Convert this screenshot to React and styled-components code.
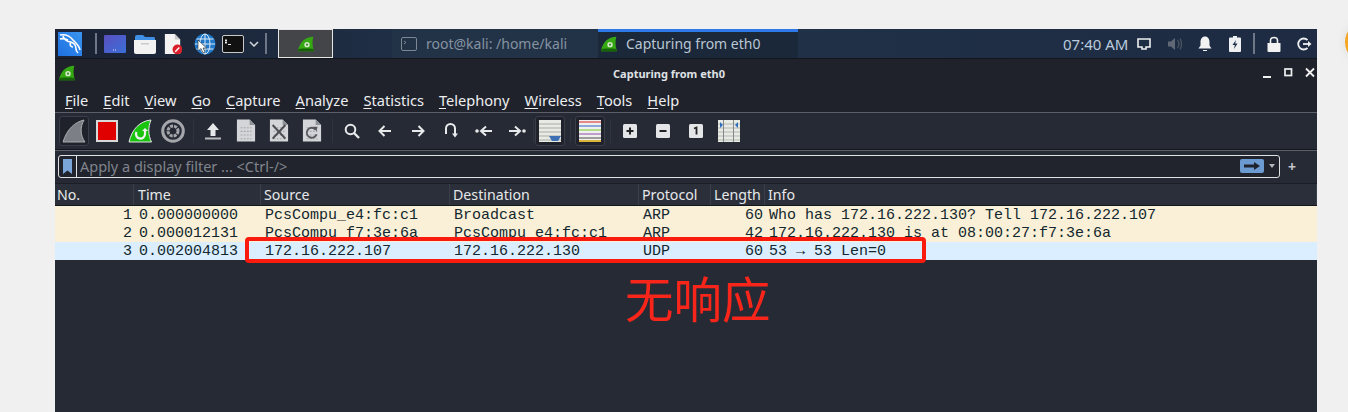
import React from 'react'
import styled, { createGlobalStyle } from 'styled-components'

const GlobalStyle = createGlobalStyle`
  html, body { margin:0; padding:0; background:#f0f0f0; height:412px; overflow:hidden; }
  * { box-sizing:border-box; }
`

const Fin = ({ size = 24, color = '#35a814', dark = '#176408', dot = true }) => (
  <svg width={size} height={size} viewBox="0 0 24 24">
    <path d="M23 1 C11 1 2 9 0 23 L24 23 C21.5 16 21 8 23 1 Z" fill={color} />
    <path d="M0 23 L24 23 L23 19.5 C15 18.5 7 19 .8 19.5 Z" fill={dark} />
    {dot && <circle cx="13.5" cy="13" r="4" fill="#d5ecc9" />}
    {dot && <circle cx="13.5" cy="13" r="1.7" fill="#4a8a3a" />}
  </svg>
)

const KaliLogo = () => (
  <svg width="24" height="24" viewBox="0 0 24 24">
    <defs><linearGradient id="kali" x1="0" y1="1" x2="1" y2="0"><stop offset="0" stopColor="#1f6fe0" /><stop offset="1" stopColor="#3a95f0" /></linearGradient></defs>
    <rect width="24" height="24" fill="url(#kali)" />
    <path d="M2 3 C7 2 12 4 15 8 C18 11 21 13 22 18 M2 7 C5 6 8 7 10 8 M5 4 C6 7 9 10 13 10 C16 11 18 14 18 17 C18 19 19 20 20 21 M13 10 C11 13 13 15 15 15" stroke="#fff" strokeWidth="1.6" fill="none" />
  </svg>
)

const FileSheet = ({ children }) => (
  <svg width="20" height="25" viewBox="0 0 22 26">
    <path d="M1 1 H15 L21 7 V25 H1 Z" fill="#d3d5d8" />
    <path d="M15 1 L21 7 H15 Z" fill="#8f9296" />
    <g stroke="#a4a7ab" strokeWidth="1.2" strokeDasharray="2 1.5">
      <path d="M5 10 H17 M5 14 H17 M5 18 H17 M5 22 H17" />
    </g>
    {children}
  </svg>
)

const Page = styled.div`
  width:1348px;
  height:412px;
  padding-top:29px;
  position:relative;
  overflow:hidden;
`

const OrangeBlob = styled.div`
  position:absolute;
  left:1345px;
  top:22px;
  width:40px;
  height:40px;
  border-radius:50%;
  background:#f6a623;
  box-shadow:0 0 6px 3px #e6e6e6;
`

const Desktop = styled.div`
  margin-left:55px;
  width:1262px;
  height:383px;
  display:flex;
  flex-direction:column;
  background:#262a35;
  position:relative;
  font-family:"Noto Sans", sans-serif;
`

const Panel = styled.div`
  height:30px;
  flex:none;
  display:flex;
  align-items:center;
  background:linear-gradient(90deg,#1a2233 0%,#20324a 35%,#1f3047 60%,#1e2b42 100%);
  border-bottom:1px solid #14161d;
`

const Launcher = styled.div`
  display:flex;
  align-items:center;
  justify-content:center;
  width:${p => p.$w}px;
  height:29px;
  flex:none;
`

const PanelSep = styled.div`
  flex:none;
  width:2px;
  height:21px;
  background:#6e7785;
`

const TaskButton = styled.div`
  width:55px;
  height:29px;
  flex:none;
  margin-left:11px;
  background:#444548;
  border:1px solid #e6e6e6;
  display:flex;
  align-items:center;
  justify-content:center;
`

const Tab = styled.div`
  height:29px;
  width:${p => p.$w}px;
  flex:none;
  margin-left:${p => p.$ml || 0}px;
  display:flex;
  align-items:center;
  gap:9px;
  padding-left:${p => p.$pl}px;
  padding-bottom:3px;
  font-size:14px;
  color:${p => (p.$active ? '#b9c6d3' : '#8593a1')};
  background:${p => (p.$active ? '#1b2839' : '#223247')};
  border-top:${p => (p.$active ? '3px solid #2f78e8' : '3px solid transparent')};
`

const Tray = styled.div`
  margin-left:auto;
  display:flex;
  align-items:center;
  height:29px;
`

const Clock = styled.span`
  font-size:15px;
  color:#b9cbdc;
  width:65px;
  white-space:nowrap;
`

const TrayIcon = styled.div`
  width:${p => p.$w || 30}px;
  display:flex;
  align-items:center;
  justify-content:center;
  flex:none;
`

const TitleBar = styled.div`
  height:28px;
  flex:none;
  display:flex;
  align-items:center;
  background:#20222b;
  position:relative;
  padding-left:4px;
`

const TitleText = styled.div`
  position:absolute;
  left:0;
  right:0;
  text-align:center;
  font-size:11px;
  font-weight:700;
  color:#dfe1e4;
  padding-right:34px;
`

const WinButtons = styled.div`
  margin-left:auto;
  display:flex;
  gap:10px;
  padding-right:1px;
`

const MenuBar = styled.div`
  height:26px;
  flex:none;
  display:flex;
  align-items:center;
  padding-left:10px;
  gap:15px;
  background:#20222b;
  border-bottom:1px solid #5d5f66;
  font-size:14.6px;
  color:#eceef0;
`

const MenuItem = styled.span`
  u { text-underline-offset:2px; text-decoration-thickness:1px; }
`

const Toolbar = styled.div`
  height:38px;
  flex:none;
  display:flex;
  align-items:center;
  padding-left:4px;
  padding-bottom:2px;
  background:#262a35;
  border-bottom:1px solid #5d5f66;
  box-shadow:inset 0 -1px 0 #14161d;
`

const ToolGroup = styled.div`
  display:flex;
  gap:3px;
`

const ToolButton = styled.div`
  width:30px;
  height:30px;
  flex:none;
  display:flex;
  align-items:center;
  justify-content:center;
  border-radius:3px;
  border:1px solid ${p => (p.$pressed ? '#3a3e49' : 'transparent')};
  background:${p => (p.$pressed ? '#1f222b' : 'transparent')};
`

const ToolSep = styled.div`
  width:${p => p.$w || 10}px;
  flex:none;
  display:flex;
  justify-content:center;
  &::after { content:''; width:1px; height:24px; background:#30343f; }
`

const FilterBar = styled.div`
  height:30px;
  flex:none;
  display:flex;
  align-items:center;
  padding-left:3px;
  background:#262a35;
`

const FilterBox = styled.div`
  width:1222px;
  height:23px;
  flex:none;
  border:1px solid #dfe1e4;
  border-radius:3px;
  display:flex;
  align-items:center;
  background:#21242d;
  overflow:hidden;
`

const Bookmark = styled.div`
  width:18px;
  height:100%;
  flex:none;
  display:flex;
  align-items:center;
  justify-content:center;
  border-right:1px solid #dfe1e4;
`

const FilterHint = styled.span`
  font-size:14.5px;
  color:#80848c;
  padding-left:3px;
  flex:1;
  white-space:nowrap;
`

const ApplyButton = styled.div`
  width:24px;
  height:14px;
  flex:none;
  border-radius:2px;
  background:#6c9bd2;
  display:flex;
  align-items:center;
  justify-content:center;
  margin-right:5px;
`

const Drop = styled.div`
  width:0;
  height:0;
  flex:none;
  margin-right:4px;
  border-left:3.5px solid transparent;
  border-right:3.5px solid transparent;
  border-top:4px solid #b5b7bc;
`

const PlusSign = styled.span`
  margin-left:8px;
  font-size:14px;
  font-weight:700;
  color:#c4c6ca;
`

const Table = styled.div`
  margin-top:2px;
  display:flex;
  flex-direction:column;
  font-family:"Liberation Mono", monospace;
`

const columns = '79px 127px 189px 189px 72px 54px 1fr'

const HeadRow = styled.div`
  display:grid;
  grid-template-columns:${columns};
  height:23px;
  background:#2b2f39;
  border-top:1px solid #1c1e25;
  border-bottom:1px solid #14161d;
  font-family:"Noto Sans", sans-serif;
  font-size:14.2px;
  color:#e6e8ea;
`

const HeadCell = styled.div`
  padding:0 0 1px ${p => p.$pl}px;
  display:flex;
  align-items:center;
  border-right:1px solid #3b3f4a;
  white-space:nowrap;
  overflow:hidden;
`

const Row = styled.div`
  display:grid;
  grid-template-columns:${columns};
  height:18px;
  line-height:19px;
  background:${p => p.$bg};
  font-size:15px;
  color:#12272e;
  white-space:nowrap;
`

const Cell = styled.div`
  padding-left:${p => p.$pl || 0}px;
  padding-right:${p => (p.$right ? 2 : 0)}px;
  text-align:${p => (p.$right ? 'right' : 'left')};
`

const RedFrame = styled.div`
  position:absolute;
  left:190px;
  top:208px;
  width:681px;
  height:26px;
  border:4px solid #fb1a0e;
  border-radius:4px;
`

const Note = styled.div`
  position:absolute;
  left:570px;
  top:233px;
  font-family:"Noto Sans CJK SC", sans-serif;
  font-size:48.5px;
  line-height:70px;
  color:#f8251a;
`

const menus = [
  ['F', 'ile'], ['E', 'dit'], ['V', 'iew'], ['G', 'o'], ['C', 'apture'], ['A', 'nalyze'],
  ['S', 'tatistics'], ['T', 'elephony'], ['W', 'ireless'], ['T', 'ools'], ['H', 'elp'],
]

const headers = [['No.', 2], ['Time', 4], ['Source', 3], ['Destination', 3], ['Protocol', 3], ['Length', 3], ['Info', 3]]

const packets = [
  { bg:'#faf0d7', no:1, time:'0.000000000', src:'PcsCompu_e4:fc:c1', dst:'Broadcast', proto:'ARP', len:60, info:'Who has 172.16.222.130? Tell 172.16.222.107' },
  { bg:'#faf0d7', no:2, time:'0.000012131', src:'PcsCompu_f7:3e:6a', dst:'PcsCompu_e4:fc:c1', proto:'ARP', len:42, info:'172.16.222.130 is at 08:00:27:f7:3e:6a' },
  { bg:'#daeeff', no:3, time:'0.002004813', src:'172.16.222.107', dst:'172.16.222.130', proto:'UDP', len:60, info:'53 → 53 Len=0' },
]

const arrow = { stroke:'#e8e9eb', strokeWidth:2, fill:'none' }

const SmallKey = ({ children }) => (
  <svg width="14" height="14" viewBox="0 0 14 14">
    <rect width="14" height="14" rx="1.5" fill="#e4e5e7" />
    {children}
  </svg>
)

export default function App() {
  return (
    <Page>
      <GlobalStyle />
      <OrangeBlob />
      <Desktop>
        <Panel>
          <Launcher $w={29}><KaliLogo /></Launcher>
          <Launcher $w={11} />
          <PanelSep />
          <Launcher $w={7} />
          <Launcher $w={22}>
            <svg width="22" height="18" viewBox="0 0 22 18">
              <defs><linearGradient id="desk" x1="0" y1="0" x2="1" y2="1"><stop offset="0" stopColor="#5a4fc0" /><stop offset="1" stopColor="#3b6fd8" /></linearGradient></defs>
              <rect width="22" height="18" rx="1" fill="url(#desk)" />
              <path d="M9 15 H13" stroke="#dfe6f5" strokeWidth="1" strokeDasharray="1 1" />
            </svg>
          </Launcher>
          <Launcher $w={38}>
            <svg width="22" height="20" viewBox="0 0 22 20">
              <path d="M1 3 Q1 1 3 1 H9 L11 3 H20 Q21 3 21 5 V6 H1 Z" fill="#3f8fe6" />
              <path d="M0 6 H22 V18 Q22 20 20 20 H2 Q0 20 0 18 Z" fill="#f2f2f2" />
              <rect x="7" y="9" width="8" height="1.5" fill="#c9c9c9" />
            </svg>
          </Launcher>
          <Launcher $w={18}>
            <svg width="20" height="24" viewBox="0 0 20 24">
              <path d="M1 1 H12 L18 7 V23 H1 Z" fill="#f3f3f3" />
              <path d="M12 1 L18 7 H12 Z" fill="#c9c9c9" />
              <circle cx="15" cy="18" r="5.5" fill="#d9202a" />
              <path d="M12.5 20.5 L17 16" stroke="#fff" strokeWidth="1.6" />
            </svg>
          </Launcher>
          <Launcher $w={6} />
          <Launcher $w={34}>
            <svg width="22" height="22" viewBox="0 0 22 22">
              <circle cx="11" cy="11" r="10.5" fill="#1f78c8" />
              <g stroke="#dbe9f5" strokeWidth="1" fill="none">
                <ellipse cx="11" cy="11" rx="5" ry="10" />
                <path d="M11 1 V21 M1 11 H21 M2.5 6 H19.5 M2.5 16 H19.5" />
              </g>
              <path d="M4 7 L4 18 L7 15.5 L9 20 L11 19 L9 15 L12.5 15 Z" fill="#fff" stroke="#222" strokeWidth=".6" />
            </svg>
          </Launcher>
          <Launcher $w={22}>
            <svg width="22" height="18" viewBox="0 0 22 18">
              <rect x=".5" y=".5" width="21" height="17" rx="1.5" fill="#111" stroke="#c9c9c9" />
              <path d="M3 5.5 H5 M3 7.5 H5 M4 4 V9 M6 9.5 H9" stroke="#e8e8e8" strokeWidth="1" />
            </svg>
          </Launcher>
          <Launcher $w={20}>
            <svg width="10" height="6" viewBox="0 0 10 6"><path d="M1 1 L5 5 L9 1" stroke="#d5d8dc" strokeWidth="1.5" fill="none" /></svg>
          </Launcher>
          <Launcher $w={1} />
          <PanelSep />
          <TaskButton>
            <Fin size={16} />
          </TaskButton>
          <Tab $w={206} $ml={59} $pl={9}>
            <svg width="16" height="14" viewBox="0 0 16 14">
              <rect x=".5" y=".5" width="15" height="13" rx="1.5" fill="none" stroke="#7c8894" />
              <path d="M3 4 L5 5.5 L3 7" stroke="#7c8894" fill="none" />
            </svg>
            root@kali: /home/kali
          </Tab>
          <Tab $w={200} $pl={3} $active>
            <Fin size={16} />
            Capturing from eth0
          </Tab>
          <Tray>
            <Clock>07:40 AM</Clock>
            <TrayIcon $w={32}>
              <svg width="14" height="12" viewBox="0 0 14 12"><path d="M1 1 H13 V9 H9 V11 H5 V9 H1 Z" fill="none" stroke="#eef0f2" strokeWidth="1.6" /></svg>
            </TrayIcon>
            <TrayIcon>
              <svg width="16" height="14" viewBox="0 0 16 14"><path d="M1 4.5 H4 L8 1 V13 L4 9.5 H1 Z" fill="#5f6874" /><path d="M10.5 3 Q13.5 7 10.5 11 M13 1.5 Q16 7 13 12.5" stroke="#4f5763" strokeWidth="1.2" fill="none" /></svg>
            </TrayIcon>
            <TrayIcon>
              <svg width="14" height="16" viewBox="0 0 14 16"><path d="M7 .5 C10 .5 11.5 3 11.5 6 V9.5 L13.5 12.5 H.5 L2.5 9.5 V6 C2.5 3 4 .5 7 .5 Z M5 14 H9 V15 H5 Z" fill="#f2f2f2" /></svg>
            </TrayIcon>
            <TrayIcon>
              <svg width="12" height="16" viewBox="0 0 12 16"><path d="M4 0 H8 V1.5 H11 Q12 1.5 12 2.5 V15 Q12 16 11 16 H1 Q0 16 0 15 V2.5 Q0 1.5 1 1.5 H4 Z" fill="#eef0f2" /><path d="M7 4 L3.5 9 H5.8 L5 13 L8.5 7.5 H6.2 Z" fill="#20324a" /></svg>
            </TrayIcon>
            <TrayIcon $w={3} />
            <PanelSep />
            <TrayIcon $w={37}>
              <svg width="14" height="16" viewBox="0 0 14 16"><path d="M3.5 7 V4.5 C3.5 .5 10.5 .5 10.5 4.5 V7" stroke="#f2f2f2" strokeWidth="1.6" fill="none" /><path d="M.5 7 H13.5 V15 Q13.5 16 12.5 16 H1.5 Q.5 16 .5 15 Z" fill="#f2f2f2" /></svg>
            </TrayIcon>
            <TrayIcon $w={25}>
              <svg width="15" height="14" viewBox="0 0 15 14"><path d="M10.5 3 A5.5 5.5 0 1 0 10.5 11" stroke="#eef0f2" strokeWidth="1.8" fill="none" /><path d="M6 7 H13" stroke="#eef0f2" strokeWidth="1.8" /><path d="M11 4 L14.5 7 L11 10 Z" fill="#eef0f2" /></svg>
            </TrayIcon>
          </Tray>
        </Panel>

        <TitleBar>
          <Fin size={16} />
          <TitleText>Capturing from eth0</TitleText>
          <WinButtons>
            <svg width="12" height="12" viewBox="0 0 12 12"><rect x="3" y="9" width="8" height="2" fill="#f0f0f0" /></svg>
            <svg width="12" height="12" viewBox="0 0 12 12"><rect x="3" y="2" width="6.5" height="6.5" fill="none" stroke="#f0f0f0" strokeWidth="1.7" /></svg>
            <svg width="12" height="12" viewBox="0 0 12 12"><path d="M2 1.5 L10 9.5 M10 1.5 L2 9.5" stroke="#f0f0f0" strokeWidth="1.8" /></svg>
          </WinButtons>
        </TitleBar>

        <MenuBar>
          {menus.map(([key, rest]) => (
            <MenuItem key={key + rest}><u>{key}</u>{rest}</MenuItem>
          ))}
        </MenuBar>

        <Toolbar>
          <ToolGroup>
            <ToolButton $pressed>
              <svg width="24" height="24" viewBox="0 0 24 24"><path d="M22 1 C13 3 5 10 1 23 H23 C18 16 18 8 22 1 Z" fill="#7c7f85" stroke="#a9abb0" /></svg>
            </ToolButton>
            <ToolButton>
              <svg width="22" height="22" viewBox="0 0 22 22"><rect x="1" y="1" width="20" height="20" fill="#e00000" stroke="#d9d9d9" strokeWidth="2" /></svg>
            </ToolButton>
            <ToolButton>
              <svg width="24" height="24" viewBox="0 0 24 24">
                <path d="M23 1 C12 2 4 10 1 23 H23.5 C20 16 20 8 23 1 Z" fill="#18c40e" stroke="#e6e6e6" />
                <path d="M17 11 V15 A4.5 4.5 0 1 1 8.5 13" stroke="#f2f2f2" strokeWidth="2.2" fill="none" />
                <path d="M14 12 L17 9 L20 12 Z" fill="#f2f2f2" />
              </svg>
            </ToolButton>
            <ToolButton>
              <svg width="24" height="24" viewBox="0 0 24 24">
                <circle cx="12" cy="12" r="10.3" fill="none" stroke="#a4a6ab" strokeWidth="3" />
                <circle cx="12" cy="12" r="5" fill="none" stroke="#a4a6ab" strokeWidth="3" strokeDasharray="3 1" />
              </svg>
            </ToolButton>
          </ToolGroup>
          <ToolSep />
          <ToolGroup>
            <ToolButton>
              <svg width="16" height="18" viewBox="0 0 16 18"><path d="M8 1 L14 8 H10.5 V14 H5.5 V8 H2 Z" fill="#e6e7e9" /><rect y="15.5" width="16" height="2" fill="#b9bbbe" /></svg>
            </ToolButton>
            <ToolButton><FileSheet /></ToolButton>
            <ToolButton>
              <FileSheet><path d="M4 7 L18 22 M18 7 L4 22" stroke="#4a4c52" strokeWidth="2.2" /></FileSheet>
            </ToolButton>
            <ToolButton>
              <FileSheet><path d="M15 12 A5.5 5.5 0 1 0 16 17" stroke="#56585e" strokeWidth="2" fill="none" /><path d="M12 9 L17 9 L16 14 Z" fill="#56585e" /></FileSheet>
            </ToolButton>
          </ToolGroup>
          <ToolSep />
          <ToolGroup>
            <ToolButton>
              <svg width="16" height="16" viewBox="0 0 16 16"><circle cx="6.5" cy="6.5" r="4.8" {...arrow} /><path d="M10 10 L15 15" {...arrow} strokeWidth="2.4" /></svg>
            </ToolButton>
            <ToolButton>
              <svg width="14" height="12" viewBox="0 0 14 12"><path d="M13 6 H2 M6.5 1 L1.5 6 L6.5 11" {...arrow} /></svg>
            </ToolButton>
            <ToolButton>
              <svg width="14" height="12" viewBox="0 0 14 12"><path d="M1 6 H12 M7.5 1 L12.5 6 L7.5 11" {...arrow} /></svg>
            </ToolButton>
            <ToolButton>
              <svg width="14" height="15" viewBox="0 0 14 15"><path d="M2 11 V5.5 A4.2 4.2 0 0 1 11 5.5 V12" {...arrow} /><path d="M8 10.5 H14 L11 14.5 Z" fill="#e8e9eb" /></svg>
            </ToolButton>
            <ToolButton>
              <svg width="18" height="12" viewBox="0 0 18 12"><circle cx="2" cy="6" r="1.8" fill="#e8e9eb" /><path d="M17 6 H7 M11 1.5 L6 6 L11 10.5" {...arrow} /></svg>
            </ToolButton>
            <ToolButton>
              <svg width="18" height="12" viewBox="0 0 18 12"><circle cx="16" cy="6" r="1.8" fill="#e8e9eb" /><path d="M1 6 H11 M7 1.5 L12 6 L7 10.5" {...arrow} /></svg>
            </ToolButton>
          </ToolGroup>
          <ToolSep $w={3} />
          <ToolButton $pressed>
            <svg width="22" height="22" viewBox="0 0 22 22">
              <rect width="22" height="22" fill="#e8eae4" />
              <path d="M0 4 H22 M0 8 H22 M0 12 H22 M0 16 H22 M0 20 H22" stroke="#a9aca6" strokeWidth="1" />
              <path d="M10 16 H22 L19 21 H13 Z" fill="#3d6fb5" />
            </svg>
          </ToolButton>
          <ToolSep />
          <ToolButton $pressed>
            <svg width="22" height="22" viewBox="0 0 22 22">
              <rect width="22" height="22" fill="#f0f0ee" />
              <path d="M0 2 H22" stroke="#d62020" />
              <path d="M0 6 H22" stroke="#2a62c8" />
              <path d="M0 10 H22" stroke="#7bc62a" />
              <path d="M0 14 H22" stroke="#8a4fa8" />
              <path d="M0 18 H22" stroke="#4a4a4a" />
              <path d="M0 21 H22" stroke="#d8a510" strokeWidth="1.6" />
            </svg>
          </ToolButton>
          <ToolSep />
          <ToolGroup>
            <ToolButton>
              <SmallKey><path d="M3.5 7 H10.5 M7 3.5 V10.5" stroke="#222" strokeWidth="2" /></SmallKey>
            </ToolButton>
            <ToolButton>
              <SmallKey><path d="M3.5 7 H10.5" stroke="#222" strokeWidth="2" /></SmallKey>
            </ToolButton>
            <ToolButton>
              <SmallKey><path d="M5 4.5 L7.5 3.5 V10.5" stroke="#222" strokeWidth="1.8" fill="none" /></SmallKey>
            </ToolButton>
            <ToolButton>
              <svg width="22" height="22" viewBox="0 0 22 22">
                <rect width="22" height="22" fill="#e8eae4" />
                <path d="M0 4 H22 M0 8 H22 M0 12 H22 M0 16 H22 M0 20 H22" stroke="#b4b7b1" />
                <path d="M5.5 0 V22 M15.5 0 V22" stroke="#85888a" />
                <path d="M2 2 L5 5 L2 8 Z M20 2 L17 5 L20 8 Z" fill="#2f6fc0" />
              </svg>
            </ToolButton>
          </ToolGroup>
        </Toolbar>

        <FilterBar>
          <FilterBox>
            <Bookmark>
              <svg width="9" height="15" viewBox="0 0 9 15"><path d="M0 0 H9 V15 L4.5 11.5 L0 15 Z" fill="#79a5d8" /></svg>
            </Bookmark>
            <FilterHint>Apply a display filter ... &lt;Ctrl-/&gt;</FilterHint>
            <ApplyButton>
              <svg width="16" height="8" viewBox="0 0 16 8"><path d="M0 2.5 H10 V0 L16 4 L10 8 V5.5 H0 Z" fill="#20232c" /></svg>
            </ApplyButton>
            <Drop />
          </FilterBox>
          <PlusSign>+</PlusSign>
        </FilterBar>

        <Table>
          <HeadRow>
            {headers.map(([h, pl]) => (
              <HeadCell key={h} $pl={pl}>{h}</HeadCell>
            ))}
          </HeadRow>
          {packets.map(p => (
            <Row key={p.no} $bg={p.bg}>
              <Cell $right>{p.no}</Cell>
              <Cell $pl={5}>{p.time}</Cell>
              <Cell $pl={4}>{p.src}</Cell>
              <Cell $pl={4}>{p.dst}</Cell>
              <Cell $pl={4}>{p.proto}</Cell>
              <Cell $right>{p.len}</Cell>
              <Cell $pl={4}>{p.info}</Cell>
            </Row>
          ))}
        </Table>

        <RedFrame />
        <Note>无响应</Note>
      </Desktop>
    </Page>
  )
}
